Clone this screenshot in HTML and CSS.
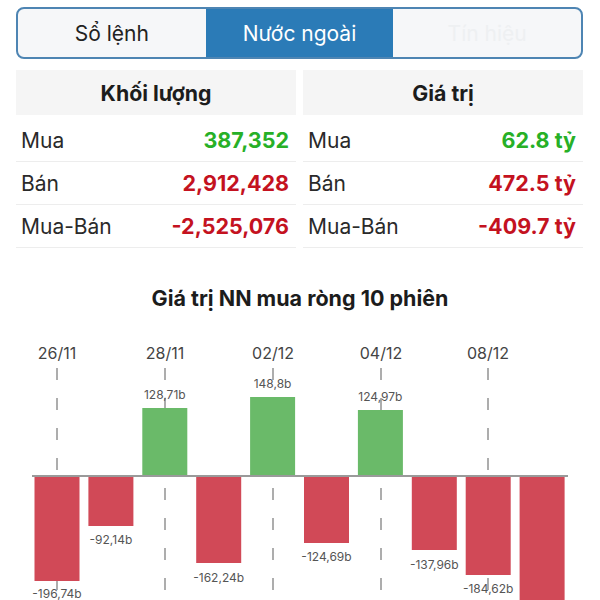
FILE: index.html
```html
<!DOCTYPE html>
<html lang="vi">
<head>
<meta charset="utf-8">
<link rel="stylesheet" href="styles.css">
</head>
<body>
<div class="seg">
  <div class="seg-item">Sổ lệnh</div>
  <div class="seg-item active">Nước ngoài</div>
  <div class="seg-item faded">Tín hiệu</div>
</div>

<div class="tables">
  <div class="table">
    <div class="thead">Khối lượng</div>
    <div class="row"><span class="lbl">Mua</span><span class="val up">387,352</span></div>
    <div class="row"><span class="lbl">Bán</span><span class="val down">2,912,428</span></div>
    <div class="row"><span class="lbl">Mua-Bán</span><span class="val down">-2,525,076</span></div>
  </div>
  <div class="table">
    <div class="thead">Giá trị</div>
    <div class="row"><span class="lbl">Mua</span><span class="val up">62.8 tỷ</span></div>
    <div class="row"><span class="lbl">Bán</span><span class="val down">472.5 tỷ</span></div>
    <div class="row"><span class="lbl">Mua-Bán</span><span class="val down">-409.7 tỷ</span></div>
  </div>
</div>

<div class="chart-title">Giá trị NN mua ròng 10 phiên</div>

<svg class="chart" width="600" height="289" viewBox="0 0 600 289">
  <g class="grid">
    <line x1="57" y1="57" x2="57" y2="289"/>
    <line x1="165" y1="57" x2="165" y2="289"/>
    <line x1="273" y1="57" x2="273" y2="289"/>
    <line x1="381" y1="57" x2="381" y2="289"/>
    <line x1="488" y1="57" x2="488" y2="289"/>
  </g>
  <g class="dates">
    <text x="57" y="48">26/11</text>
    <text x="165" y="48">28/11</text>
    <text x="273" y="48">02/12</text>
    <text x="381" y="48">04/12</text>
    <text x="488" y="48">08/12</text>
  </g>
  <line class="zero" x1="32" y1="165" x2="568" y2="165"/>
  <g class="neg">
    <rect x="34.5" y="166" width="45" height="104"/>
    <rect x="88.4" y="166" width="45" height="49"/>
    <rect x="196.2" y="166" width="45" height="86"/>
    <rect x="304" y="166" width="45" height="66"/>
    <rect x="411.8" y="166" width="45" height="73"/>
    <rect x="465.7" y="166" width="45" height="98"/>
    <rect x="519.6" y="166" width="45" height="138"/>
  </g>
  <g class="pos">
    <rect x="142.3" y="97" width="45" height="67"/>
    <rect x="250.1" y="86" width="45" height="78"/>
    <rect x="357.9" y="99" width="45" height="65"/>
  </g>
  <g class="vals">
    <text x="164.8" y="88">128,71b</text>
    <text x="272.6" y="77">148,8b</text>
    <text x="380.4" y="90">124,97b</text>
    <text x="57" y="287">-196,74b</text>
    <text x="110.9" y="233">-92,14b</text>
    <text x="218.7" y="271">-162,24b</text>
    <text x="326.5" y="250">-124,69b</text>
    <text x="434.3" y="258">-137,96b</text>
    <text x="488.2" y="282">-184,62b</text>
  </g>
</svg>
</body>
</html>
```

FILE: styles.css
```css
html, body {
  margin: 0;
  padding: 0;
  background: #ffffff;
}

body {
  width: 600px;
  height: 600px;
  overflow: hidden;
  font-family: Inter, "Noto Sans", "Liberation Sans", sans-serif;
  color: #222222;
}

.seg {
  margin: 7px 17px 0 16px;
  height: 48px;
  border: 2px solid #4e85b3;
  border-radius: 8px;
  overflow: hidden;
  display: grid;
  grid-template-columns: 1fr 1fr 1fr;
  background: #f6f7f9;
}

.seg-item {
  display: flex;
  align-items: center;
  justify-content: center;
  font-size: 21px;
  color: #222222;
}

.seg-item.active {
  background: #2b7bb7;
  color: #ffffff;
}

.seg-item.faded {
  color: #eef0f2;
}

.tables {
  margin: 11px 17px 0 16px;
  display: grid;
  grid-template-columns: 1fr 1fr;
  column-gap: 7px;
}

.thead {
  height: 45px;
  background: #f5f5f5;
  display: flex;
  align-items: center;
  justify-content: center;
  font-weight: 700;
  font-size: 21.3px;
  color: #1c1c1c;
  margin-bottom: 4px;
}

.row {
  height: 42px;
  border-bottom: 1px solid #ededed;
  display: flex;
  align-items: center;
  justify-content: space-between;
  padding: 0 7px 0 5px;
  font-size: 21px;
}

.lbl {
  color: #2a2a2a;
}

.val {
  font-weight: 700;
  font-size: 21.5px;
}

.up {
  color: #27b027;
}

.down {
  color: #c4121f;
}

.chart-title {
  margin-top: 37px;
  height: 26px;
  line-height: 26px;
  text-align: center;
  font-weight: 700;
  font-size: 21.5px;
  color: #1c1c1c;
}

.chart {
  display: block;
}

.grid line {
  stroke: #adadad;
  stroke-width: 2;
  stroke-dasharray: 12 18;
}

.dates text {
  font-family: Inter, "Noto Sans", "Liberation Sans", sans-serif;
  font-size: 16px;
  fill: #444444;
  text-anchor: middle;
}

.zero {
  stroke: #9a9a9a;
  stroke-width: 2;
}

.neg rect {
  fill: #d14957;
}

.pos rect {
  fill: #6aba69;
}

.vals text {
  font-family: Inter, "Noto Sans", "Liberation Sans", sans-serif;
  font-size: 12px;
  fill: #555555;
  text-anchor: middle;
}
```
